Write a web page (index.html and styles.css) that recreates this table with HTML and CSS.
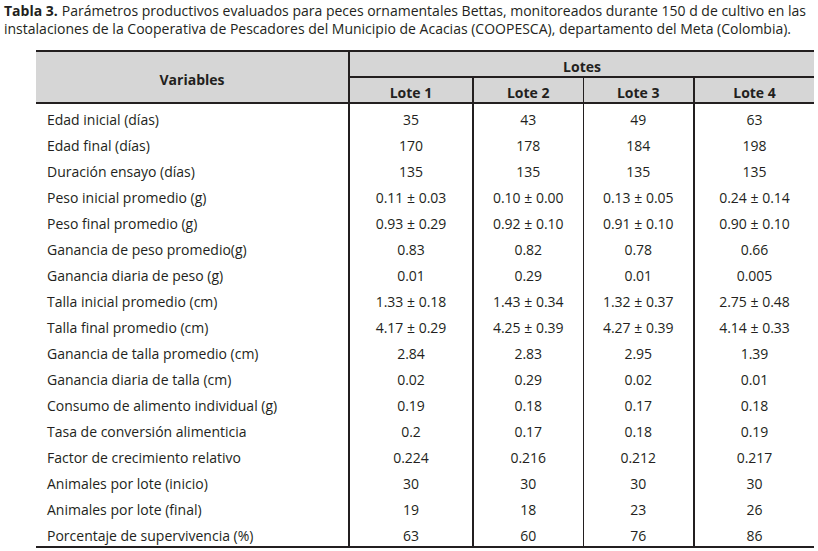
FILE: index.html
```html
<!DOCTYPE html>
<html lang="es">
<head>
<meta charset="utf-8">
<link rel="stylesheet" href="styles.css">
</head>
<body>
<div class="page">
<p class="caption"><b class="label">Tabla 3.</b><span class="text">Parámetros productivos evaluados para peces ornamentales Bettas, monitoreados durante 150 d de cultivo en las instalaciones de la Cooperativa de Pescadores del Municipio de Acacias (COOPESCA), departamento del Meta (Colombia).</span></p>
<table class="data">
<colgroup>
<col class="c-var"><col class="c-l1"><col class="c-l2"><col class="c-l3"><col class="c-l4">
</colgroup>
<thead>
<tr><th rowspan="2" class="h-var">Variables</th><th colspan="4" class="h-lotes">Lotes</th></tr>
<tr><th class="thick">Lote 1</th><th class="thin">Lote 2</th><th class="thick">Lote 3</th><th>Lote 4</th></tr>
</thead>
<tbody>
<tr><td>Edad inicial (días)</td><td>35</td><td>43</td><td>49</td><td>63</td></tr>
<tr><td>Edad final (días)</td><td>170</td><td>178</td><td>184</td><td>198</td></tr>
<tr><td>Duración ensayo (días)</td><td>135</td><td>135</td><td>135</td><td>135</td></tr>
<tr><td>Peso inicial promedio (g)</td><td>0.11 ± 0.03</td><td>0.10 ± 0.00</td><td>0.13 ± 0.05</td><td>0.24 ± 0.14</td></tr>
<tr><td>Peso final promedio (g)</td><td>0.93 ± 0.29</td><td>0.92 ± 0.10</td><td>0.91 ± 0.10</td><td>0.90 ± 0.10</td></tr>
<tr><td>Ganancia de peso promedio(g)</td><td>0.83</td><td>0.82</td><td>0.78</td><td>0.66</td></tr>
<tr><td>Ganancia diaria de peso (g)</td><td>0.01</td><td>0.29</td><td>0.01</td><td>0.005</td></tr>
<tr><td>Talla inicial promedio (cm)</td><td>1.33 ± 0.18</td><td>1.43 ± 0.34</td><td>1.32 ± 0.37</td><td>2.75 ± 0.48</td></tr>
<tr><td>Talla final promedio (cm)</td><td>4.17 ± 0.29</td><td>4.25 ± 0.39</td><td>4.27 ± 0.39</td><td>4.14 ± 0.33</td></tr>
<tr><td>Ganancia de talla promedio (cm)</td><td>2.84</td><td>2.83</td><td>2.95</td><td>1.39</td></tr>
<tr><td>Ganancia diaria de talla (cm)</td><td>0.02</td><td>0.29</td><td>0.02</td><td>0.01</td></tr>
<tr><td>Consumo de alimento individual (g)</td><td>0.19</td><td>0.18</td><td>0.17</td><td>0.18</td></tr>
<tr><td>Tasa de conversión alimenticia</td><td>0.2</td><td>0.17</td><td>0.18</td><td>0.19</td></tr>
<tr><td>Factor de crecimiento relativo</td><td>0.224</td><td>0.216</td><td>0.212</td><td>0.217</td></tr>
<tr><td>Animales por lote (inicio)</td><td>30</td><td>30</td><td>30</td><td>30</td></tr>
<tr><td>Animales por lote (final)</td><td>19</td><td>18</td><td>23</td><td>26</td></tr>
<tr><td>Porcentaje de supervivencia (%)</td><td>63</td><td>60</td><td>76</td><td>86</td></tr>
</tbody>
</table>
</div>
</body>
</html>
```

FILE: styles.css
```css
html, body {
  margin: 0;
  padding: 0;
  background: #ffffff;
}
body {
  font-family: "Open Sans", "DejaVu Sans", sans-serif;
  color: #231f20;
}
.page {
  padding: 2px 4px 0 4px;
}
.caption {
  margin: 0;
  font-size: 14px;
  line-height: 18px;
}
.caption .label {
  font-weight: 700;
  margin-right: 4px;
}
.data {
  margin: 12px 0 0 32px;
  width: 778px;
  border-collapse: collapse;
  font-size: 14px;
  table-layout: fixed;
}
.c-var { width: 313px; }
.c-l1 { width: 124px; }
.c-l2 { width: 110px; }
.c-l3 { width: 111px; }
.c-l4 { width: 120px; }
.data thead th {
  background: #d6d6d6;
  font-weight: 700;
  height: 19px;
  padding: 5px 0 0 0;
  line-height: 18px;
  text-align: center;
  vertical-align: middle;
}
.data thead tr:first-child th {
  border-top: 2px solid #231f20;
}
.data thead tr:last-child th,
.data thead .h-var {
  border-bottom: 2px solid #231f20;
}
.h-var {
  border-right: 2px solid #231f20;
}
.h-lotes {
  border-bottom: 2px solid #231f20;
}
.data th.thick { border-right: 2px solid #231f20; }
.data th.thin { border-right: 1px solid #231f20; }
.data tbody td {
  height: 21px;
  padding: 5px 0 0 0;
  line-height: 18px;
  text-align: center;
  vertical-align: middle;
}
.data tbody td:first-child {
  text-align: left;
  padding-left: 11px;
  border-right: 2px solid #231f20;
}
.data tbody td:nth-child(2) { border-right: 2px solid #231f20; }
.data tbody td:nth-child(3) { border-right: 1px solid #231f20; }
.data tbody td:nth-child(4) { border-right: 2px solid #231f20; }
.data tbody tr:last-child td {
  border-bottom: 2px solid #231f20;
}
```
